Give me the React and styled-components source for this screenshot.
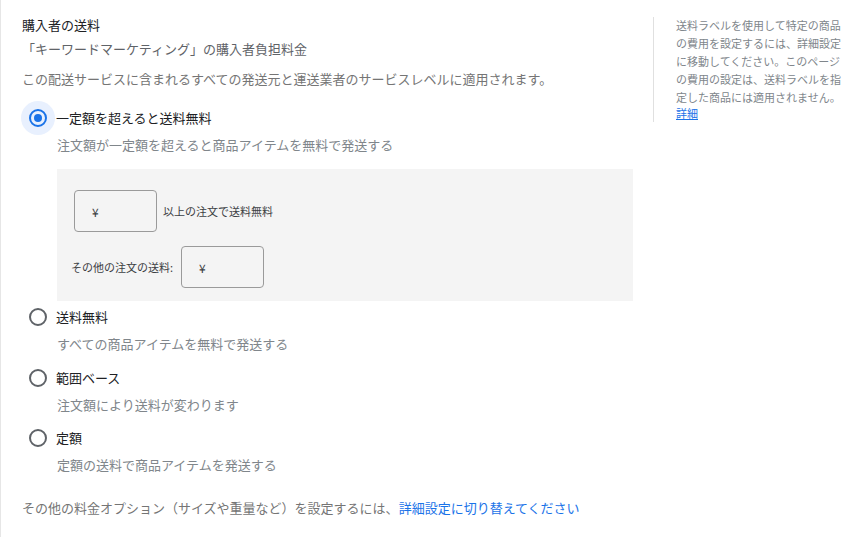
import React from "react";
import styled, { createGlobalStyle } from "styled-components";

const Global = createGlobalStyle`
  html, body { margin: 0; padding: 0; background: #ffffff; }
  body {
    font-family: "Noto Sans CJK JP", "Noto Sans", Roboto, sans-serif;
    -webkit-font-smoothing: antialiased;
  }
`;

const Page = styled.div`
  display: flex;
  align-items: flex-start;
  min-height: 537px;
  box-sizing: border-box;
  border-left: 1px solid #e6e6e6;
  padding: 15px 0 0 21px;
`;

const Main = styled.div`
  width: 611px;
  display: flex;
  flex-direction: column;
`;

const Title = styled.div`
  font-size: 13px;
  line-height: 20px;
  color: #202124;
`;

const Sub = styled.div`
  margin-top: 4px;
  font-size: 13px;
  line-height: 20px;
  color: #5f6368;
`;

const Note = styled.div`
  margin-top: 10px;
  font-size: 13px;
  line-height: 20px;
  color: #757575;
`;

const Options = styled.div`
  margin-top: 12px;
  display: flex;
  flex-direction: column;
`;

const Option = styled.div`
  display: flex;
  flex-direction: column;
  margin-top: ${(p) => p.$gap || 0}px;
`;

const OptionRow = styled.label`
  display: flex;
  align-items: center;
  height: 34px;
  cursor: pointer;
`;

const Halo = styled.span`
  width: 34px;
  height: 34px;
  margin-left: -1px;
  margin-right: 1px;
  border-radius: 50%;
  display: flex;
  align-items: center;
  justify-content: center;
  flex-shrink: 0;
  background: ${(p) => (p.$on ? "#e8f0fe" : "transparent")};
`;

const Ring = styled.span`
  box-sizing: border-box;
  width: 18px;
  height: 18px;
  border-radius: 50%;
  border: 2px solid ${(p) => (p.$on ? "#1a73e8" : "#5f6368")};
  display: flex;
  align-items: center;
  justify-content: center;
  &::after {
    content: "";
    display: ${(p) => (p.$on ? "block" : "none")};
    width: 8px;
    height: 8px;
    border-radius: 50%;
    background: #1a73e8;
  }
`;

const OptionLabel = styled.span`
  font-size: 13px;
  line-height: 20px;
  color: #202124;
`;

const OptionDesc = styled.div`
  padding-left: 35px;
  font-size: 13px;
  line-height: 20px;
  color: #80868b;
`;

const Panel = styled.div`
  margin: 14px 0 0 35px;
  width: 576px;
  box-sizing: border-box;
  background: #f4f4f4;
  padding: 21px 0 13px 14px;
  display: flex;
  flex-direction: column;
  gap: 14px;
`;

const PanelRow = styled.div`
  display: flex;
  align-items: center;
  padding-left: ${(p) => p.$indent || 0}px;
`;

const Small = styled.span`
  font-size: 11px;
  line-height: 16px;
  color: #3c4043;
  margin-left: ${(p) => p.$ml || 0}px;
  margin-right: ${(p) => p.$mr || 0}px;
`;

const Money = styled.div`
  box-sizing: border-box;
  width: 83px;
  height: 42px;
  border: 1px solid #9a9a9a;
  border-radius: 4px;
  display: flex;
  align-items: center;
  padding-left: 17px;
  font-size: 12px;
  color: #3c4043;
`;

const Footer = styled.div`
  margin-top: 23px;
  font-size: 13px;
  line-height: 20px;
  color: #757575;
`;

const Link = styled.a`
  color: #1a73e8;
  text-decoration: ${(p) => (p.$underline ? "underline" : "none")};
  cursor: pointer;
`;

const Aside = styled.aside`
  margin: 2px 0 0 20px;
  border-left: 1px solid #e0e0e0;
  padding: 0 0 0 22px;
  height: 105px;
  width: 170px;
  box-sizing: content-box;
`;

const AsideText = styled.div`
  font-size: 11px;
  line-height: 18px;
  color: #80868b;
  margin-top: -1px;
`;

const AsideLink = styled.div`
  font-size: 11px;
  line-height: 14px;
`;

const options = [
  { label: "一定額を超えると送料無料", desc: "注文額が一定額を超えると商品アイテムを無料で発送する", on: true, gap: 0 },
  { label: "送料無料", desc: "すべての商品アイテムを無料で発送する", on: false, gap: -1 },
  { label: "範囲ベース", desc: "注文額により送料が変わります", on: false, gap: 7 },
  { label: "定額", desc: "定額の送料で商品アイテムを発送する", on: false, gap: 6 },
];

export default function App() {
  return (
    <>
      <Global />
      <Page>
        <Main>
          <Title>購入者の送料</Title>
          <Sub>「キーワードマーケティング」の購入者負担料金</Sub>
          <Note>この配送サービスに含まれるすべての発送元と運送業者のサービスレベルに適用されます。</Note>
          <Options>
            {options.map((o, i) => (
              <Option key={o.label} $gap={o.gap}>
                <OptionRow>
                  <Halo $on={o.on}>
                    <Ring $on={o.on} />
                  </Halo>
                  <OptionLabel>{o.label}</OptionLabel>
                </OptionRow>
                <OptionDesc>{o.desc}</OptionDesc>
                {i === 0 && (
                  <Panel>
                    <PanelRow $indent={3}>
                      <Money>¥</Money>
                      <Small $ml={6}>以上の注文で送料無料</Small>
                    </PanelRow>
                    <PanelRow>
                      <Small $mr={8}>その他の注文の送料:</Small>
                      <Money>¥</Money>
                    </PanelRow>
                  </Panel>
                )}
              </Option>
            ))}
          </Options>
          <Footer>
            その他の料金オプション（サイズや重量など）を設定するには、
            <Link>詳細設定に切り替えてください</Link>
          </Footer>
        </Main>
        <Aside>
          <AsideText>
            送料ラベルを使用して特定の商品の費用を設定するには、詳細設定に移動してください。このページの費用の設定は、送料ラベルを指定した商品には適用されません。
          </AsideText>
          <AsideLink>
            <Link $underline>詳細</Link>
          </AsideLink>
        </Aside>
      </Page>
    </>
  );
}
